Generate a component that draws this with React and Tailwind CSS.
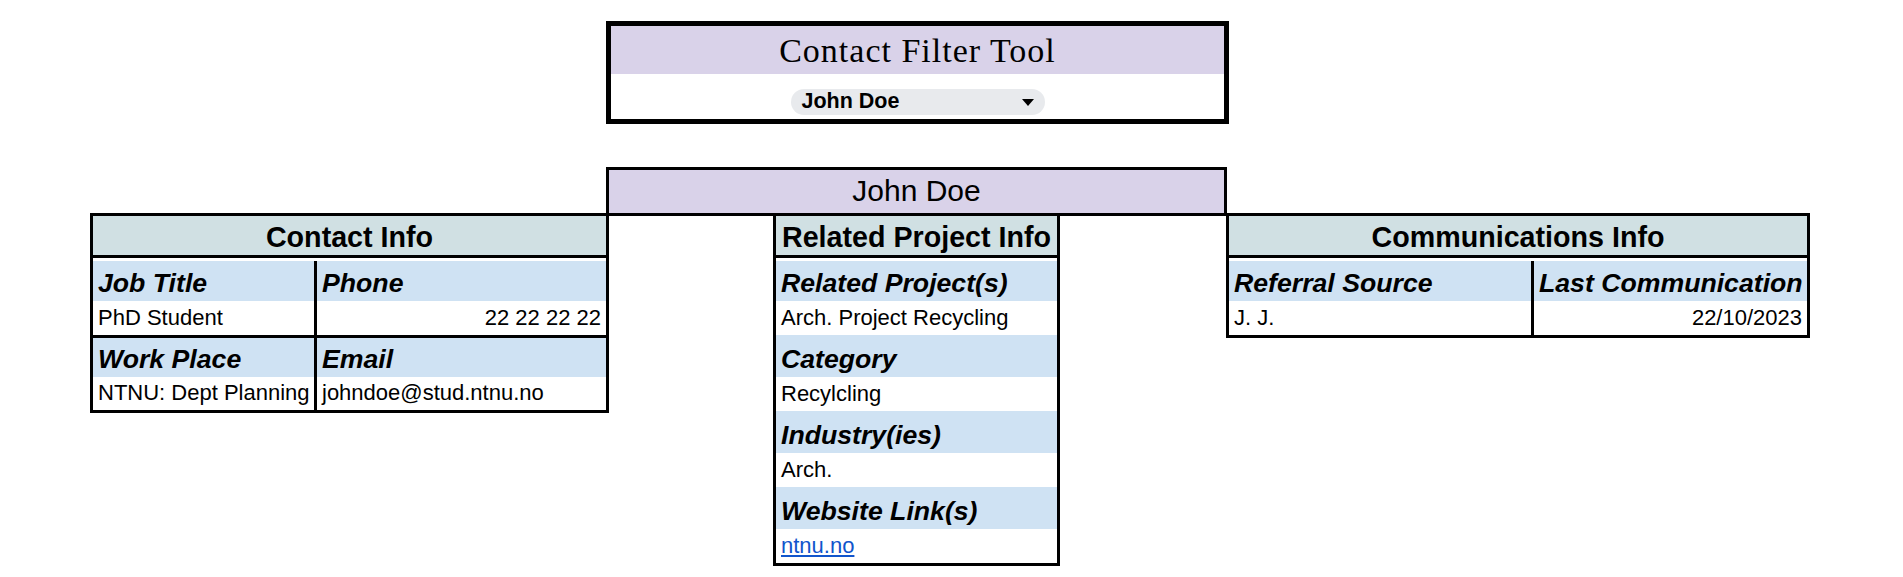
import React from 'react';

const sans = "font-['Liberation_Sans',Arial,sans-serif]";

// Label cell (blue, bold italic) and value cell (white)
const Label = ({ children, className = '' }) => (
  <div className={`flex items-end bg-[#cfe2f3] px-[5px] pb-[2px] text-[26.67px] font-bold italic leading-[1.15] whitespace-nowrap ${className}`}>
    {children}
  </div>
);

const Value = ({ children, right = false, className = '' }) => (
  <div className={`flex items-end bg-white px-[5px] pb-[5px] text-[22px] leading-[1.15] whitespace-nowrap ${right ? 'justify-end' : ''} ${className}`}>
    {children}
  </div>
);

const Header = ({ children }) => (
  <div className="flex h-[42px] items-end justify-center border-b-[3px] border-black bg-[#d0e0e3] pb-[1px] text-[28.67px] font-bold leading-[1.15] whitespace-nowrap">
    {children}
  </div>
);

const ContactInfo = () => (
  <div className="w-[519px] shrink-0 border-[3px] border-black">
    <div className="h-[45px]">
      <Header>Contact Info</Header>
    </div>
    <div className="grid grid-cols-[224px_289px]">
      <Label className="h-[40px] border-r-[3px] border-black">Job Title</Label>
      <Label className="h-[40px]">Phone</Label>
      <Value className="h-[37px] border-r-[3px] border-b-[3px] border-black">PhD Student</Value>
      <Value right className="h-[37px] border-b-[3px] border-black">22 22 22 22</Value>
      <Label className="h-[39px] border-r-[3px] border-black">Work Place</Label>
      <Label className="h-[39px]">Email</Label>
      <Value className="h-[33px] border-r-[3px] border-black">NTNU: Dept Planning</Value>
      <Value className="h-[33px]">johndoe@stud.ntnu.no</Value>
    </div>
  </div>
);

const ProjectInfo = () => (
  <div className="w-[287px] shrink-0 border-[3px] border-black">
    <div className="h-[45px]">
      <Header>Related Project Info</Header>
    </div>
    <div className="flex flex-col">
      <Label className="h-[40px]">Related Project(s)</Label>
      <Value className="h-[34px]">Arch. Project Recycling</Value>
      <Label className="h-[42px]">Category</Label>
      <Value className="h-[34px]">Recylcling</Value>
      <Label className="h-[42px]">Industry(ies)</Label>
      <Value className="h-[34px]">Arch.</Value>
      <Label className="h-[42px]">Website Link(s)</Label>
      <Value className="h-[34px]">
        <a href="#" className="text-[#1155cc] underline">ntnu.no</a>
      </Value>
    </div>
  </div>
);

const CommunicationsInfo = () => (
  <div className="w-[584px] shrink-0 border-[3px] border-black">
    <div className="h-[45px]">
      <Header>Communications Info</Header>
    </div>
    <div className="grid grid-cols-[305px_273px]">
      <Label className="h-[40px] border-r-[3px] border-black">Referral Source</Label>
      <Label className="h-[40px]">Last Communication</Label>
      <Value className="h-[34px] border-r-[3px] border-black">J. J.</Value>
      <Value right className="h-[34px]">22/10/2023</Value>
    </div>
  </div>
);

export default function App() {
  return (
    <div className={`min-h-screen bg-white text-black ${sans}`}>
      <div className="pl-[90px] pt-[21px]">
        {/* filter box */}
        <div className="ml-[516px] w-[623px] border-[5px] border-black">
          <div className="flex h-[48px] items-center justify-center bg-[#d9d2e9] pt-[2px] font-['Liberation_Serif','Times_New_Roman',serif] text-[34px] leading-none tracking-[1px]">
            Contact Filter Tool
          </div>
          <div className="flex h-[45px] justify-center pt-[15px]">
            <div className="flex h-[26px] w-[254px] items-center justify-between rounded-full bg-[#e8eaed] pl-[11px] pr-[11px]">
              <span className="text-[21.5px] font-bold leading-none">John Doe</span>
              <svg width="12" height="7" viewBox="0 0 12 7">
                <path d="M0 0h12L6 7z" fill="#000" />
              </svg>
            </div>
          </div>
        </div>

        {/* selected contact */}
        <div className="mt-[43px] ml-[516px] flex h-[49px] w-[621px] items-end justify-center border-[3px] border-black bg-[#d9d2e9] pb-[5px] text-[30px] leading-[1.15]">
          John Doe
        </div>

        <div className="-mt-[3px] flex items-start">
          <ContactInfo />
          <div className="w-[164px] shrink-0" />
          <ProjectInfo />
          <div className="w-[166px] shrink-0" />
          <CommunicationsInfo />
        </div>
      </div>
    </div>
  );
}
